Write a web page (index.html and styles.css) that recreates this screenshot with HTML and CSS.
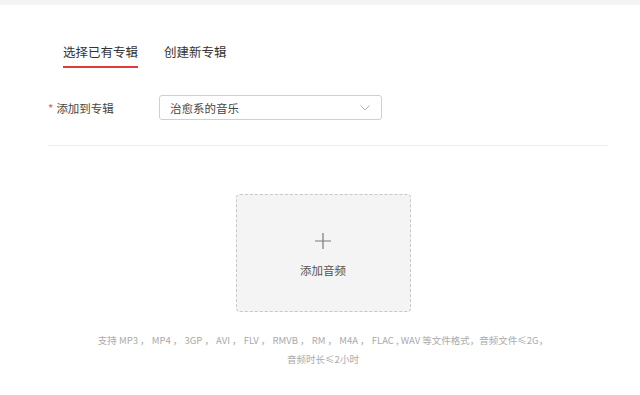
FILE: index.html
```html
<html>
  <head>
    <meta charset="utf-8">
    <link rel="stylesheet" href="styles.css">
  </head>
  <body>
    <div class="top-bar"></div>
    <div class="panel">
      <div class="tabs">
        <div class="tab tab-active">选择已有专辑</div>
        <div class="tab">创建新专辑</div>
      </div>
      <div class="form-row">
        <label class="form-label"><span class="required">*</span>添加到专辑</label>
        <div class="select">
          <span>治愈系的音乐</span>
          <svg class="chevron" width="10" height="6" viewBox="0 0 10 6">
            <path d="M0.5 0.5 L5 5 L9.5 0.5" fill="none" stroke="#b4b4b4" stroke-width="1"/>
          </svg>
        </div>
      </div>
      <hr class="divider">
      <div class="upload-area">
        <div class="upload-box">
          <svg class="plus" width="16" height="16" viewBox="0 0 16 16">
            <path d="M8 0 V16 M0 8 H16" stroke="#7a7a7a" stroke-width="1.2"/>
          </svg>
          <span class="upload-text">添加音频</span>
        </div>
        <p class="hint">支持 MP3 ， MP4 ， 3GP ， AVI ， FLV ， RMVB ， RM ， M4A ， FLAC , WAV 等文件格式，音频文件≤2G，</p>
        <p class="hint">音频时长≤2小时</p>
      </div>
    </div>
  </body>
</html>
```

FILE: styles.css
```css
body {
  margin: 0;
  background-color: #fff;
  font-family: "Noto Sans CJK SC", "Liberation Sans", sans-serif;
  color: #333;
}

.top-bar {
  height: 5px;
  background-color: #f4f4f4;
}

.panel {
  padding: 0 32px 0 48px;
}

.tabs {
  display: flex;
  gap: 26px;
  padding-left: 15px;
  margin-top: 37px;
}

.tab {
  font-size: 12.5px;
  line-height: 20px;
  padding-bottom: 4px;
  border-bottom: 2px solid transparent;
  color: #333;
}

.tab-active {
  border-bottom-color: #e03a3a;
}

.form-row {
  display: flex;
  align-items: center;
  margin-top: 27px;
}

.form-label {
  width: 111px;
  font-size: 11.5px;
  color: #444;
}

.required {
  color: #e45b5b;
  margin-right: 3px;
}

.select {
  display: flex;
  align-items: center;
  justify-content: space-between;
  width: 201px;
  height: 23px;
  padding: 0 10px 0 10px;
  border: 1px solid #cfcfcf;
  border-radius: 3px;
  font-size: 11.5px;
  color: #444;
}

.chevron {
  margin-right: 1px;
}

.divider {
  border: none;
  height: 1px;
  background-color: #ededed;
  margin: 25px 0 0 0;
}

.upload-area {
  display: flex;
  flex-direction: column;
  align-items: center;
  padding-right: 10px;
}

.upload-box {
  display: flex;
  flex-direction: column;
  align-items: center;
  width: 173px;
  height: 116px;
  margin-top: 48px;
  border: 1px dashed #c8c8c8;
  border-radius: 4px;
  background-color: #f4f4f4;
}

.plus {
  margin-top: 38px;
}

.upload-text {
  margin-top: 13px;
  font-size: 11.5px;
  color: #555;
}

.hint {
  margin: 0;
  font-size: 9.5px;
  line-height: 19px;
  color: #aaa;
}

.hint:first-of-type {
  margin-top: 19px;
}
```
